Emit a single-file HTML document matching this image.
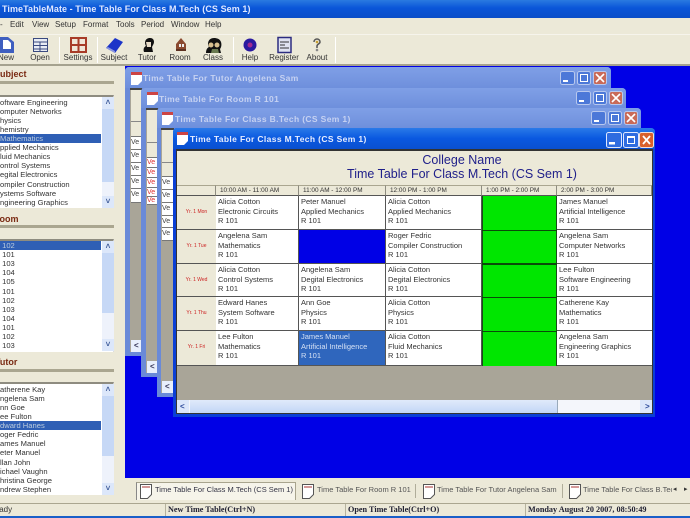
<!DOCTYPE html>
<html><head><meta charset="utf-8"><style>
html,body{margin:0;padding:0}
body{width:690px;height:518px;overflow:hidden;position:relative;background:#ece9d8;font-family:"Liberation Sans",sans-serif;color:#222;filter:blur(.35px)}
div,svg,span{position:absolute}
div{white-space:nowrap;box-sizing:border-box}
.mi{top:20px;font-size:8px;color:#333}
.tb{top:53px;font-size:8px;color:#333;width:44px;text-align:center}
.sep{top:37px;width:1px;height:26px;background:#c4c0ac;border-right:1px solid #fff}
.hd{font:bold 9px "Liberation Sans",sans-serif;color:#7a2a12}
.ln{left:0;width:114px;height:3px;background:#aaa690}
.lb{left:-1px;width:115px;height:113px;background:#fff;border-top:2px solid #8e8c80;border-right:1px solid #ddd}
.it{left:0;width:101px;height:9px;line-height:9px;font-size:7.6px;color:#333;padding-left:0}
.sel{background:#2f5fb5;color:#bcd}
.sb{left:102px;width:12px;background:#c6d8f6}
.arr{left:102px;width:12px;height:12px;background:#dce7fa;color:#3d5a98;font:bold 8px/12px "Liberation Sans",sans-serif;text-align:center}
.win{border-radius:4px 4px 0 0}
.wt{color:#c6d2f2;font:bold 8.5px "Liberation Sans",sans-serif;letter-spacing:.36px}
.ve{width:11px;height:12px;background:#fff;border-bottom:1px solid #777;font-size:7px;line-height:12px;color:#444}
.r{color:#d33}
.c{font-size:7.5px;line-height:9.7px;background:#fff;padding:1px 0 0 2px;color:#333;border-right:1px solid #555;border-bottom:1px solid #555}
.l{left:177px;width:39px;background:#ece9d8;color:#c22;font-size:5px;text-align:center;line-height:32px;border-bottom:1px solid #555}
.h{top:185px;height:11px;background:#ece9d8;font-size:6.4px;line-height:10px;text-align:left;padding-left:4px;color:#333;border-right:1px solid #8e8c80;border-top:1px solid #aaa690;border-bottom:1px solid #555}
.tab{top:485px;font-size:7.5px;color:#555}
</style></head><body>
<!-- title -->
<div style="left:0;top:0;width:690px;height:18px;background:linear-gradient(#2a7ae0,#0a55d8 45%,#0a4ec8)"></div>
<div style="left:2px;top:4px;color:#dfe8ff;font:bold 9px 'Liberation Sans',sans-serif;letter-spacing:.07px">TimeTableMate - Time Table For Class M.Tech (CS Sem 1)</div>
<!-- menu -->
<div class="mi" style="left:0">-</div><div class="mi" style="left:10px">Edit</div><div class="mi" style="left:32px">View</div><div class="mi" style="left:55px">Setup</div><div class="mi" style="left:83px">Format</div><div class="mi" style="left:116px">Tools</div><div class="mi" style="left:141px">Period</div><div class="mi" style="left:171px">Window</div><div class="mi" style="left:205px">Help</div>
<!-- toolbar -->
<div style="left:0;top:34px;width:690px;height:1px;background:#f6f4ec"></div>
<div style="left:0;top:64px;width:690px;height:2px;background:#a5a28f"></div>
<div class="sep" style="left:59px"></div><div class="sep" style="left:97px"></div><div class="sep" style="left:233px"></div><div class="sep" style="left:335px"></div>
<svg style="left:0;top:36px" width="340" height="18">
<path d="M-3 1h11l6 5v11H-3z" fill="#3f5fc0"/><path d="M3 4h5l3 3v6H3z" fill="#fff"/>
<rect x="33.500" y="2.500" width="14" height="13" fill="#e8ecf4" stroke="#3a4a80"/><path d="M34 6h13M34 9.500h13M34 13h13M40 6v9" stroke="#3a4a80" fill="none"/>
<rect x="70" y="1" width="17" height="16" fill="#a83b28"/><rect x="72" y="3" width="5.500" height="5" fill="#f0e6d8"/><rect x="79.500" y="3" width="5.500" height="5" fill="#f0e6d8"/><rect x="72" y="10" width="5.500" height="5" fill="#f0e6d8"/><rect x="79.500" y="10" width="5.500" height="5" fill="#f0e6d8"/>
<path d="M106 12l9-10 8 4-8 11z" fill="#1c34c8"/><path d="M106 12l9 5v-2l-7-4z" fill="#8a96e0"/>
<path d="M144 16c-1-3 0-5 2-6-2-3-1-8 4-8 4 0 5 4 3 7l-1 2 1 5z" fill="#111"/><path d="M146 6h5v5h-4z" fill="#e8dcc8"/>
<path d="M176 8l5-6 5 6v7h-10z" fill="#8a4a30"/><rect x="179" y="8" width="2" height="3" fill="#eee"/><rect x="182" y="8" width="2" height="3" fill="#eee"/><rect x="176" y="13" width="10" height="2" fill="#5c3020"/>
<path d="M206 17c0-3 1-5 3-6-2-3-1-9 5-9 3 0 6 1 7 4 1 3 0 6-1 7l1 4z" fill="#111"/><circle cx="211" cy="9" r="2.500" fill="#d8c090"/><circle cx="217" cy="9" r="2.500" fill="#d8c090"/><path d="M212 13h6l1 4h-8z" fill="#6a7a50"/>
<circle cx="250" cy="9" r="6.500" fill="#2a1aa0"/><circle cx="250" cy="9" r="2.500" fill="#a02a90"/>
<rect x="278" y="1.500" width="13" height="15" fill="#dfe2f0" stroke="#2c2c80" stroke-width="1.500"/><path d="M280 6h9M280 9h5M280 12h9" stroke="#333" fill="none"/>
<path d="M314 6c0-4 6-4 6 0 0 2-3 2-3 4v2" stroke="#555" stroke-width="1.500" fill="none"/><circle cx="317" cy="14" r="1.300" fill="#888"/><circle cx="317" cy="6" r="1.300" fill="#c8a030"/>
</svg>
<div class="tb" style="left:-16px">New</div><div class="tb" style="left:18px">Open</div><div class="tb" style="left:56px">Settings</div><div class="tb" style="left:92px">Subject</div><div class="tb" style="left:125px">Tutor</div><div class="tb" style="left:158px">Room</div><div class="tb" style="left:191px">Class</div><div class="tb" style="left:228px">Help</div><div class="tb" style="left:262px">Register</div><div class="tb" style="left:295px">About</div>
<!-- desktop -->
<div style="left:125px;top:66px;width:565px;height:412px;background:#0000e6"></div>
<!-- left -->
<div class="hd" style="top:69px;left:-6px">Subject</div><div class="ln" style="top:81px"></div>
<div class="lb" style="top:95px"></div>
<div class="it" style="top:98px">oftware Engineering</div><div class="it" style="top:107px">omputer Networks</div><div class="it" style="top:116px">hysics</div><div class="it" style="top:125px">hemistry</div><div class="it sel" style="top:134px">Mathematics</div><div class="it" style="top:143px">pplied Mechanics</div><div class="it" style="top:152px">luid Mechanics</div><div class="it" style="top:161px">ontrol Systems</div><div class="it" style="top:170px">egital Electronics</div><div class="it" style="top:180px">ompiler Construction</div><div class="it" style="top:189px">ystems Software</div><div class="it" style="top:198px">ngineering Graphics</div>
<div class="sb" style="top:97px;height:110px"></div><div style="left:102px;top:182px;width:12px;height:14px;background:#eef2fb"></div><div class="arr" style="top:97px">&#708;</div><div class="arr" style="top:196px">&#709;</div>
<div class="hd" style="top:214px;left:-7px">Room</div><div class="ln" style="top:225px"></div>
<div class="lb" style="top:239px"></div>
<div class="it sel" style="top:241px">&nbsp;102</div><div class="it" style="top:250px">&nbsp;101</div><div class="it" style="top:259px">&nbsp;103</div><div class="it" style="top:268px">&nbsp;104</div><div class="it" style="top:277px">&nbsp;105</div><div class="it" style="top:287px">&nbsp;101</div><div class="it" style="top:296px">&nbsp;102</div><div class="it" style="top:305px">&nbsp;103</div><div class="it" style="top:314px">&nbsp;104</div><div class="it" style="top:323px">&nbsp;101</div><div class="it" style="top:332px">&nbsp;102</div><div class="it" style="top:341px">&nbsp;103</div>
<div class="sb" style="top:241px;height:110px"></div><div style="left:102px;top:313px;width:12px;height:27px;background:#eef2fb"></div><div class="arr" style="top:241px">&#708;</div><div class="arr" style="top:339px">&#709;</div>
<div class="hd" style="top:357px;left:-5px">Tutor</div><div class="ln" style="top:369px"></div>
<div class="lb" style="top:382px"></div>
<div class="it" style="top:385px">atherene Kay</div><div class="it" style="top:394px">ngelena Sam</div><div class="it" style="top:403px">nn Goe</div><div class="it" style="top:412px">ee Fulton</div><div class="it sel" style="top:421px">dward Hanes</div><div class="it" style="top:430px">oger Fedric</div><div class="it" style="top:439px">ames Manuel</div><div class="it" style="top:448px">eter Manuel</div><div class="it" style="top:458px">llan John</div><div class="it" style="top:467px">ichael Vaughn</div><div class="it" style="top:476px">hristina George</div><div class="it" style="top:485px">ndrew Stephen</div>
<div class="sb" style="top:384px;height:110px"></div><div style="left:102px;top:456px;width:12px;height:27px;background:#eef2fb"></div><div class="arr" style="top:384px">&#708;</div><div class="arr" style="top:483px">&#709;</div>
<!-- window 1 -->
<div class="win" style="left:125px;top:67px;width:486px;height:289px;background:#6a8ad8"></div>
<div class="win" style="left:125px;top:67px;width:486px;height:21px;background:linear-gradient(#7f9fe6,#6e8fdc)"></div>
<div class="wt" style="left:143px;top:73px">Time Table For Tutor Angelena Sam</div>
<div style="left:130px;top:88px;width:12px;height:264px;background:#a9a598;border-top:2px solid #444"></div>
<div style="left:131px;top:90px;width:11px;height:47px;background:#ece9d8;border-bottom:1px solid #777"></div><div style="left:131px;top:121px;width:11px;height:1px;background:#888"></div>
<div class="ve" style="left:131px;top:137px;height:13px">Ve</div><div class="ve" style="left:131px;top:150px;height:13px">Ve</div><div class="ve" style="left:131px;top:163px;height:13px">Ve</div><div class="ve" style="left:131px;top:176px;height:13px">Ve</div><div class="ve" style="left:131px;top:189px;height:14px">Ve</div>
<div style="left:131px;top:340px;width:11px;height:12px;background:#e8effc;color:#335;font:bold 8px/12px 'Liberation Sans',sans-serif;padding-left:3px">&#706;</div>
<!-- window 2 -->
<div class="win" style="left:141px;top:88px;width:485px;height:289px;background:#6a8ad8"></div>
<div class="win" style="left:141px;top:88px;width:485px;height:20px;background:linear-gradient(#7f9fe6,#6e8fdc)"></div>
<div class="wt" style="left:159px;top:94px">Time Table For Room R 101</div>
<div style="left:146px;top:108px;width:12px;height:265px;background:#a9a598;border-top:2px solid #444"></div>
<div style="left:147px;top:110px;width:11px;height:48px;background:#ece9d8;border-bottom:1px solid #777"></div><div style="left:147px;top:142px;width:11px;height:1px;background:#888"></div>
<div class="ve r" style="left:147px;top:158px;height:10px;line-height:10px">Ve</div><div class="ve r" style="left:147px;top:168px;height:10px;line-height:10px">Ve</div><div class="ve r" style="left:147px;top:178px;height:10px;line-height:10px">Ve</div><div class="ve r" style="left:147px;top:188px;height:9px;line-height:9px">Ve</div><div class="ve r" style="left:147px;top:197px;height:8px;line-height:8px">Ve</div>
<div style="left:147px;top:361px;width:11px;height:12px;background:#e8effc;color:#335;font:bold 8px/12px 'Liberation Sans',sans-serif;padding-left:3px">&#706;</div>
<!-- window 3 -->
<div class="win" style="left:157px;top:108px;width:484px;height:289px;background:#6a8ad8"></div>
<div class="win" style="left:157px;top:108px;width:484px;height:20px;background:linear-gradient(#7f9fe6,#6e8fdc)"></div>
<div class="wt" style="left:175px;top:114px">Time Table For Class B.Tech (CS Sem 1)</div>
<div style="left:161px;top:128px;width:13px;height:265px;background:#a9a598;border-top:2px solid #444"></div>
<div style="left:162px;top:130px;width:12px;height:47px;background:#ece9d8;border-bottom:1px solid #777"></div><div style="left:162px;top:162px;width:12px;height:1px;background:#888"></div>
<div class="ve" style="left:162px;top:177px;height:13px;width:12px">Ve</div><div class="ve" style="left:162px;top:190px;height:13px;width:12px">Ve</div><div class="ve" style="left:162px;top:203px;height:13px;width:12px">Ve</div><div class="ve" style="left:162px;top:216px;height:12px;width:12px">Ve</div><div class="ve" style="left:162px;top:228px;height:13px;width:12px">Ve</div>
<div style="left:162px;top:381px;width:12px;height:12px;background:#e8effc;color:#335;font:bold 8px/12px 'Liberation Sans',sans-serif;padding-left:3px">&#706;</div>
<!-- title buttons faded -->
<svg style="left:0;top:0" width="690" height="150">
<g id="b"><rect x="560.500" y="71.500" width="14" height="13" rx="2" fill="#4c78d8" stroke="#b8c8ee"/><rect x="563" y="80" width="5" height="2" fill="#fff"/><rect x="577.500" y="71.500" width="13" height="13" rx="2" fill="#4c78d8" stroke="#b8c8ee"/><rect x="580.500" y="74.500" width="7" height="7" fill="none" stroke="#fff"/><rect x="593.500" y="71.500" width="13" height="13" rx="2" fill="#c96a58" stroke="#b8c8ee"/><path d="M596 74l8 8m0-8l-8 8" stroke="#fff" stroke-width="1.600"/></g>
<use href="#b" x="16" y="20"/><use href="#b" x="31" y="40"/>
</svg>
<!-- window 4 -->
<div class="win" style="left:173px;top:128px;width:482px;height:289px;background:#0a3fd6"></div>
<div class="win" style="left:173px;top:128px;width:482px;height:21px;background:linear-gradient(#2a7ae8,#0a58e0 50%,#0a50d0)"></div>
<div class="wt" style="left:190px;top:134px;color:#e8eeff">Time Table For Class M.Tech (CS Sem 1)</div>
<!-- titlebar icons -->
<svg style="left:0;top:0" width="200" height="150">
<g id="ic"><path d="M131 72h11v9l-4 4h-7z" fill="#fff"/><rect x="131" y="72" width="11" height="3" fill="#c44"/></g>
<use href="#ic" x="16" y="20"/><use href="#ic" x="31" y="40"/><use href="#ic" x="46" y="60"/>
</svg>
<svg style="left:600px;top:128px" width="56" height="22">
<rect x="6.500" y="4.500" width="15" height="15" rx="2" fill="#2f6ce0" stroke="#dfe8ff"/><rect x="9" y="14" width="6" height="2.500" fill="#fff"/>
<rect x="23.500" y="4.500" width="15" height="15" rx="2" fill="#2f6ce0" stroke="#dfe8ff"/><rect x="27.500" y="8.500" width="7" height="7" fill="none" stroke="#fff"/><rect x="27" y="8" width="8" height="2" fill="#fff"/>
<rect x="39.500" y="4.500" width="14" height="15" rx="2" fill="#d8602c" stroke="#f4e0d8"/><path d="M43 8l7 8m0-8l-7 8" stroke="#fff" stroke-width="1.800"/>
</svg>
<div style="left:176px;top:149px;width:477px;height:265px;background:#ece9d8;border:1px solid #333;border-width:2px 1px 1px 1px"></div>
<div style="left:177px;top:153px;width:570px;text-align:center;font-size:12.5px;color:#20208a">College Name</div>
<div style="left:177px;top:167px;width:570px;text-align:center;font-size:12.500px;color:#20208a">Time Table For Class M.Tech (CS Sem 1)</div>
<!-- header -->
<div class="h" style="left:177px;width:39px"></div><div class="h" style="left:216px;width:83px">10:00 AM - 11:00 AM</div><div class="h" style="left:299px;width:87px">11:00 AM - 12:00 PM</div><div class="h" style="left:386px;width:96px">12:00 PM - 1:00 PM</div><div class="h" style="left:482px;width:75px">1:00 PM - 2:00 PM</div><div class="h" style="left:557px;width:95px">2:00 PM - 3:00 PM</div>
<!-- labels -->
<div class="l" style="top:196px;height:34px">Yr. 1 Mon</div><div class="l" style="top:230px;height:34px">Yr. 1 Tue</div><div class="l" style="top:264px;height:33px">Yr. 1 Wed</div><div class="l" style="top:297px;height:34px">Yr. 1 Thu</div><div class="l" style="top:331px;height:35px">Yr. 1 Fri</div>
<!-- rows -->
<div class="c" style="left:216px;top:196px;width:83px;height:34px">Alicia Cotton<br>Electronic Circuits<br>R 101</div><div class="c" style="left:299px;top:196px;width:87px;height:34px">Peter Manuel<br>Applied Mechanics<br>R 101</div><div class="c" style="left:386px;top:196px;width:96px;height:34px">Alicia Cotton<br>Applied Mechanics<br>R 101</div><div class="c" style="left:557px;top:196px;width:95px;height:34px;border-right:0">James Manuel<br>Artificial Intelligence<br>R 101</div>
<div class="c" style="left:216px;top:230px;width:83px;height:34px">Angelena Sam<br>Mathematics<br>R 101</div><div class="c" style="left:299px;top:230px;width:87px;height:34px;background:#0000e6"></div><div class="c" style="left:386px;top:230px;width:96px;height:34px">Roger Fedric<br>Compiler Construction<br>R 101</div><div class="c" style="left:557px;top:230px;width:95px;height:34px;border-right:0">Angelena Sam<br>Computer Networks<br>R 101</div>
<div class="c" style="left:216px;top:264px;width:83px;height:33px">Alicia Cotton<br>Control Systems<br>R 101</div><div class="c" style="left:299px;top:264px;width:87px;height:33px">Angelena Sam<br>Degital Electronics<br>R 101</div><div class="c" style="left:386px;top:264px;width:96px;height:33px">Alicia Cotton<br>Degital Electronics<br>R 101</div><div class="c" style="left:557px;top:264px;width:95px;height:33px;border-right:0">Lee Fulton<br>Software Engineering<br>R 101</div>
<div class="c" style="left:216px;top:297px;width:83px;height:34px">Edward Hanes<br>System Software<br>R 101</div><div class="c" style="left:299px;top:297px;width:87px;height:34px">Ann Goe<br>Physics<br>R 101</div><div class="c" style="left:386px;top:297px;width:96px;height:34px">Alicia Cotton<br>Physics<br>R 101</div><div class="c" style="left:557px;top:297px;width:95px;height:34px;border-right:0">Catherene Kay<br>Mathematics<br>R 101</div>
<div class="c" style="left:216px;top:331px;width:83px;height:35px">Lee Fulton<br>Mathematics<br>R 101</div><div class="c" style="left:299px;top:331px;width:87px;height:35px;background:#2f66bd;color:#d4e0f4">James Manuel<br>Artificial Intelligence<br>R 101</div><div class="c" style="left:386px;top:331px;width:96px;height:35px">Alicia Cotton<br>Fluid Mechanics<br>R 101</div><div class="c" style="left:557px;top:331px;width:95px;height:35px;border-right:0">Angelena Sam<br>Engineering Graphics<br>R 101</div>
<!-- green -->
<div style="left:482px;top:196px;width:75px;height:170px;background:#00e600;border:1px solid #1a4a1a;border-width:0 1px 0 1px"></div>
<div style="left:482px;top:230px;width:75px;height:1px;background:#0a4a0a"></div><div style="left:482px;top:263px;width:75px;height:2px;background:#0a4a0a"></div><div style="left:482px;top:297px;width:75px;height:1px;background:#0a4a0a"></div><div style="left:482px;top:331px;width:75px;height:1px;background:#0a4a0a"></div>
<!-- gray + scroll -->
<div style="left:177px;top:366px;width:475px;height:34px;background:#a9a598"></div>
<div style="left:177px;top:400px;width:475px;height:13px;background:#f4f6fb"></div>
<div style="left:190px;top:400px;width:368px;height:13px;background:linear-gradient(#e0eafa,#c2d6f6);border-right:1px solid #9ab"></div>
<div style="left:177px;top:400px;width:12px;height:13px;background:#dce7fa;color:#2c4a9a;font:bold 8px/13px 'Liberation Sans',sans-serif;padding-left:3px">&#706;</div>
<div style="left:640px;top:400px;width:12px;height:13px;background:#dce7fa;color:#2c4a9a;font:bold 8px/13px 'Liberation Sans',sans-serif;padding-left:5px">&#707;</div>
<!-- bottom tabs -->
<div style="left:136px;top:482px;width:160px;height:18px;background:#f6f4ea;border:1px solid #a8a48e;border-bottom:0;border-left-color:#888"></div>
<div style="left:415px;top:484px;width:1px;height:14px;background:#b0ad9a"></div><div style="left:562px;top:484px;width:1px;height:14px;background:#b0ad9a"></div>
<svg style="left:0;top:482px" width="690" height="20">
<g id="t" fill="none" stroke="#555"><path d="M140.500 2.500h11v10l-4 4h-7z" fill="#fff"/><path d="M142 5h8" stroke="#a33"/></g>
<use href="#t" x="162"/><use href="#t" x="283"/><use href="#t" x="429"/>
</svg>
<div class="tab" style="left:155px;color:#334">Time Table For Class M.Tech (CS Sem 1)</div><div class="tab" style="left:317px">Time Table For Room R 101</div><div class="tab" style="left:437px">Time Table For Tutor Angelena Sam</div><div style="left:583px;top:485px;font-size:7.500px;color:#555;width:89px;overflow:hidden">Time Table For Class B.Tech</div>
<div class="tab" style="left:673px;color:#333;font-size:7px">&#9666;</div><div class="tab" style="left:684px;color:#333;font-size:7px">&#9656;</div>
<!-- status -->
<div style="left:0;top:503px;width:690px;height:13px;background:#ece9d8;border-top:1px solid #aaa690"></div>
<div style="left:165px;top:504px;width:1px;height:12px;background:#b5b29e"></div><div style="left:345px;top:504px;width:1px;height:12px;background:#b5b29e"></div><div style="left:525px;top:504px;width:1px;height:12px;background:#b5b29e"></div>
<div style="left:-11px;top:505px;font-size:8px;color:#333">Ready</div>
<div style="left:168px;top:505px;font:bold 8.200px 'Liberation Serif',serif;color:#223">New Time Table(Ctrl+N)</div>
<div style="left:348px;top:505px;font:bold 8.200px 'Liberation Serif',serif;color:#223">Open Time Table(Ctrl+O)</div>
<div style="left:528px;top:505px;font:bold 8.200px 'Liberation Serif',serif;color:#223">Monday August 20 2007, 08:50:49</div>
<div style="left:0;top:516px;width:690px;height:2px;background:#1a5fc8"></div>
</body></html>
